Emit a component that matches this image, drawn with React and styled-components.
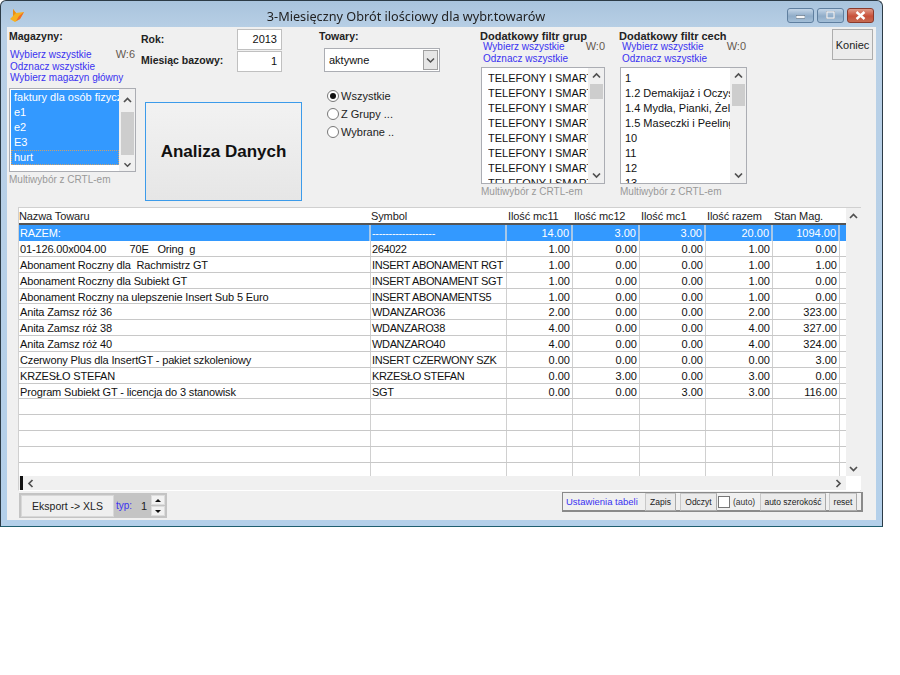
import React from 'react';
import styled, { createGlobalStyle } from 'styled-components';

const GlobalStyle = createGlobalStyle`
  html, body {
    margin: 0;
    background: #fff;
    font-family: "Liberation Sans", Arial, sans-serif;
    font-size: 11px;
    color: #111;
  }
`;

const Window = styled.div`
  width: 883px;
  height: 527px;
  box-sizing: border-box;
  border: 1px solid #2c3b46;
  border-bottom-color: #1f5f70;
  border-radius: 6px 6px 0 0;
  background: linear-gradient(to bottom, #a9c4dd 0, #b9d0e6 30px, #b4d0ea 100%);
  display: flex;
  flex-direction: column;
  padding: 0 6px 6px;
  filter: blur(0.3px);
`;

const TitleBar = styled.div`
  height: 26px;
  display: flex;
  align-items: center;
  flex-shrink: 0;
`;

const TitleIcon = styled.svg`
  width: 16px;
  height: 16px;
  margin: 4px 0 0 2px;
`;

const Title = styled.div`
  flex: 1;
  text-align: center;
  font-family: "Noto Sans", sans-serif;
  font-size: 12.7px;
  color: #222;
  padding-top: 4px;
`;

const Caption = styled.div`
  display: flex;
  gap: 3px;
  margin: 2px 2px 0 0;
`;

const CaptionButton = styled.div`
  width: 27px;
  height: 15px;
  border: 1px solid ${({ $close }) => ($close ? '#8a3a2c' : '#5f7f9f')};
  border-radius: 3px;
  box-sizing: border-box;
  background: ${({ $close }) =>
    $close
      ? 'linear-gradient(to bottom, #e09a88, #c8503a 55%, #c46a52)'
      : 'linear-gradient(to bottom, #c4d6e8, #8facc8 55%, #a4bfd8)'};
  display: flex;
  align-items: center;
  justify-content: center;
  svg { display: block; }
`;

const Client = styled.div`
  flex: 1;
  background: #f0f0f0;
  display: flex;
  flex-direction: column;
  min-height: 0;
`;

const TopPanel = styled.div`
  height: 180px;
  display: flex;
  padding-left: 2px;
  flex-shrink: 0;
`;

const Column = styled.div`
  width: ${({ $w }) => $w}px;
  flex-shrink: 0;
  display: flex;
  flex-direction: column;
  align-items: flex-start;
`;

const Heading = styled.div`
  font-weight: bold;
  font-size: ${({ $size }) => $size || 10.5}px;
  line-height: 12px;
  margin-top: 3px;
  color: #222;
  white-space: nowrap;
`;

const LinkRow = styled.div`
  display: flex;
  width: ${({ $w }) => $w}px;
  justify-content: space-between;
  padding-left: ${({ $in }) => $in || 0}px;
  box-sizing: border-box;
`;

const BlueLink = styled.div`
  font-size: 10px;
  line-height: 11.7px;
  color: #3a32f0;
  white-space: nowrap;
  padding-left: ${({ $in }) => $in || 0}px;
`;

const Counter = styled.span`
  font-size: 11px;
  line-height: 11.5px;
  color: #665a50;
`;

const LinkBlock = styled.div`
  margin-top: ${({ $mt }) => $mt}px;
`;

const ListBox = styled.div`
  width: ${({ $w }) => $w}px;
  height: ${({ $h }) => $h}px;
  margin: ${({ $mt }) => $mt}px 0 0 ${({ $ml }) => $ml || 0}px;
  box-sizing: border-box;
  border: 1px solid #abadb3;
  background: #fff;
  display: flex;
  overflow: hidden;
  flex-shrink: 0;
`;

const ListItems = styled.div`
  flex: 1;
  min-width: 0;
  overflow: hidden;
  padding: ${({ $pad }) => $pad}px 0 0 ${({ $left }) => $left}px;
`;

const ListItem = styled.div`
  height: 15px;
  line-height: 15px;
  font-size: 11px;
  white-space: nowrap;
  overflow: hidden;
  box-sizing: border-box;
  padding-left: ${({ $sel }) => ($sel ? 3 : 0)}px;
  background: ${({ $sel }) => ($sel ? '#3399ff' : 'transparent')};
  color: ${({ $sel }) => ($sel ? '#fff' : '#111')};
  outline: ${({ $focus }) => ($focus ? '1px dotted #c8a070' : 'none')};
  outline-offset: -1px;
`;

const ListScroll = styled.div`
  width: 16px;
  flex-shrink: 0;
  background: #f0f0f0;
  display: flex;
  flex-direction: column;
  align-items: center;
`;

const Arrow = styled.svg`
  width: 15px;
  height: ${({ $h }) => $h || 15}px;
  flex-shrink: 0;
`;

const Thumb = styled.div`
  width: 13px;
  height: ${({ $h }) => $h}px;
  background: #cdcdcd;
  flex-shrink: 0;
`;

const Spring = styled.div`
  flex: 1;
`;

const Hint = styled.div`
  font-size: 10px;
  color: #999;
  line-height: 12px;
  margin: ${({ $mt }) => $mt}px 0 0 ${({ $ml }) => $ml || 0}px;
  white-space: nowrap;
`;

const FieldRow = styled.div`
  display: flex;
  align-items: center;
  width: 141px;
  height: 21px;
  margin-top: ${({ $mt }) => $mt}px;
`;

const FieldLabel = styled.div`
  width: 96px;
  font-weight: bold;
  font-size: 10.5px;
  color: #222;
  white-space: nowrap;
  margin-top: ${({ $up }) => -$up}px;
`;

const NumberBox = styled.div`
  width: 45px;
  height: 21px;
  box-sizing: border-box;
  border: 1px solid #c0c0c0;
  background: #fff;
  text-align: right;
  padding-right: 4px;
  line-height: 19px;
  font-size: 11px;
`;

const BigButton = styled.div`
  width: 157px;
  height: 99px;
  margin: 30px 0 0 4px;
  box-sizing: border-box;
  border: 1px solid #3c9bea;
  background: linear-gradient(to bottom, #f2f2f2, #e6e6e6);
  font-size: 17px;
  font-weight: bold;
  color: #111;
  display: flex;
  align-items: center;
  justify-content: center;
`;

const Select = styled.div`
  width: 116px;
  height: 24px;
  margin: 6px 0 0 5px;
  box-sizing: border-box;
  border: 1px solid #abadb3;
  background: #fff;
  display: flex;
  align-items: center;
  justify-content: space-between;
  padding: 1px 1px 1px 4px;
  font-size: 11px;
`;

const SelectArrow = styled.div`
  width: 15px;
  height: 20px;
  box-sizing: border-box;
  border: 1px solid #a0a0a0;
  background: #e6e6e6;
  display: flex;
  align-items: center;
  justify-content: center;
`;

const RadioGroup = styled.div`
  margin: 18px 0 0 8px;
  display: flex;
  flex-direction: column;
  gap: 6px;
`;

const RadioRow = styled.div`
  display: flex;
  align-items: center;
  height: 12px;
  gap: 2px;
  font-size: 11px;
  color: #222;
`;

const RadioDot = styled.div`
  width: 12px;
  height: 12px;
  box-sizing: border-box;
  border: 1px solid #777;
  border-radius: 50%;
  background: #fff;
  display: flex;
  align-items: center;
  justify-content: center;
  &::after {
    content: '';
    width: 6px;
    height: 6px;
    border-radius: 50%;
    background: ${({ $on }) => ($on ? '#111' : 'transparent')};
  }
`;

const CloseButton = styled.div`
  width: 41px;
  height: 31px;
  margin-top: 2px;
  box-sizing: border-box;
  border: 1px solid #adadad;
  background: #ececec;
  font-size: 11px;
  color: #222;
  display: flex;
  align-items: center;
  justify-content: center;
`;

const Table = styled.div`
  width: 843px;
  height: 284px;
  margin-left: 11px;
  box-sizing: border-box;
  border: 1px solid #d0d0d0;
  border-bottom-color: #fff;
  background: #fff;
  display: grid;
  grid-template-columns: 827px 15px;
  grid-template-rows: 1fr 14px;
  flex-shrink: 0;
`;

const Rows = styled.div`
  overflow: hidden;
  min-height: 0;
`;

const cols = '352px 136px 66px 67px 66px 67px 67px 6px';

const HeaderRow = styled.div`
  display: grid;
  grid-template-columns: ${cols};
  height: 17px;
  box-sizing: border-box;
  border-bottom: 2px solid #555;
  line-height: 16px;
  color: #222;
  letter-spacing: -0.12px;
`;

const HeaderCell = styled.div`
  white-space: nowrap;
  overflow: hidden;
  padding-left: ${({ $num }) => ($num ? 1 : 0)}px;
`;

const Row = styled.div`
  display: grid;
  grid-template-columns: ${cols};
  height: ${({ $sel }) => ($sel ? 16 : 15.85)}px;
  box-sizing: border-box;
  background: ${({ $sel }) => ($sel ? '#3399ff' : '#fff')};
  color: ${({ $sel }) => ($sel ? '#fff' : '#111')};
  border-bottom: ${({ $sel }) => ($sel ? 'none' : '1px solid #c8c8c8')};
`;

const Cell = styled.div`
  box-sizing: border-box;
  border-right: ${({ $sel }) => ($sel ? '2px solid #a8c8e8' : '1px solid #d0d0d0')};
  padding: 1px 2px 0 1px;
  line-height: 15px;
  white-space: pre;
  overflow: hidden;
  text-align: ${({ $num }) => ($num ? 'right' : 'left')};
  letter-spacing: ${({ $spacing }) => $spacing}px;
`;

const VScroll = styled.div`
  background: #f0f0f0;
  display: flex;
  flex-direction: column;
  align-items: center;
  padding: 1px 0 0;
`;

const HScroll = styled.div`
  background: #f0f0f0;
  display: flex;
  align-items: center;
  height: 14px;
`;

const HMark = styled.div`
  width: 3px;
  height: 14px;
  background: #111;
  margin-left: 1px;
`;

const Corner = styled.div`
  background: #fff;
`;

const BottomBar = styled.div`
  flex: 1;
  display: flex;
  justify-content: space-between;
  align-items: flex-start;
  padding: 1px 13px 0 12px;
`;

const ExportPanel = styled.div`
  width: 148px;
  height: 25px;
  margin-top: 1px;
  background: #c4c4c4;
  display: flex;
  align-items: center;
  padding-left: 2px;
  box-sizing: border-box;
`;

const ExportButton = styled.div`
  width: 93px;
  height: 22px;
  box-sizing: border-box;
  border: 1px solid #d8d8d8;
  background: #efefef;
  color: #222;
  font-size: 10.5px;
  display: flex;
  align-items: center;
  justify-content: center;
`;

const TypLabel = styled.div`
  width: 27px;
  padding-left: 2px;
  box-sizing: border-box;
  font-size: 10px;
  color: #3a32f0;
`;

const TypValue = styled.div`
  width: 9px;
  font-size: 11px;
  color: #222;
`;

const Spin = styled.div`
  width: 14px;
  height: 21px;
  margin-left: 1px;
  display: flex;
  flex-direction: column;
  gap: 1px;
`;

const SpinPart = styled.div`
  flex: 1;
  background: #f2f2f2;
  border: 1px solid #ddd;
  box-sizing: border-box;
  display: flex;
  align-items: center;
  justify-content: center;
  &::after {
    content: '';
    border-left: 3px solid transparent;
    border-right: 3px solid transparent;
    ${({ $down }) => ($down ? 'border-top: 3px solid #111;' : 'border-bottom: 3px solid #111;')}
  }
`;

const SettingsPanel = styled.div`
  width: 301px;
  height: 20px;
  box-sizing: border-box;
  border: 1px solid #8a8a8a;
  border-width: 1px 2px 2px 1px;
  display: flex;
  align-items: center;
  padding-left: 3px;
  font-size: 8.5px;
  color: #222;
`;

const SettingsTitle = styled.div`
  width: 79px;
  font-size: 9.5px;
  color: #3a32f0;
  white-space: nowrap;
`;

const SmallButton = styled.div`
  width: ${({ $w }) => $w}px;
  height: 18px;
  margin-left: ${({ $ml }) => $ml || 0}px;
  box-sizing: border-box;
  border: 1px solid #c8c8c8;
  border-right-color: #aaa;
  border-bottom-color: #aaa;
  background: #ebebeb;
  font-size: 8.5px;
  display: flex;
  align-items: center;
  justify-content: center;
  white-space: nowrap;
`;

const CheckBox = styled.div`
  width: 12px;
  height: 12px;
  box-sizing: border-box;
  border: 1px solid #777;
  background: #fff;
  margin-left: 1px;
`;

const AutoLabel = styled.div`
  width: 29px;
  padding-left: 3px;
  box-sizing: border-box;
  font-size: 8.5px;
  color: #333;
`;

const Chevron = ({ dir, h }) => {
  const d = {
    up: 'M4 9 L7.5 5.5 L11 9',
    down: 'M4 6 L7.5 9.5 L11 6',
    left: 'M9.5 4 L6 7.5 L9.5 11',
    right: 'M5.5 4 L9 7.5 L5.5 11',
  }[dir];
  return (
    <Arrow viewBox="0 0 15 15" $h={h}>
      <path d={d} fill="none" stroke="#505050" strokeWidth="1.7" />
    </Arrow>
  );
};

const cellSpacing = (i) => (i === 0 ? -0.15 : i === 1 ? -0.35 : 0);

const warehouses = ['faktury dla osób fizycznych', 'e1', 'e2', 'E3', 'hurt'];
const groups = Array(8).fill('TELEFONY I SMARTFONY');
const features = ['1', '1.2 Demakijaż i Oczyszczanie', '1.4 Mydła, Pianki, Żele', '1.5 Maseczki i Peelingi', '10', '11', '12', '13'];

const empty = ['', '', '', '', '', '', ''];

const rows = [
  ['01-126.00x004.00        70E   Oring  g', '264022', '1.00', '0.00', '0.00', '1.00', '0.00'],
  ['Abonament Roczny dla  Rachmistrz GT', 'INSERT ABONAMENT RGT', '1.00', '0.00', '0.00', '1.00', '1.00'],
  ['Abonament Roczny dla Subiekt GT', 'INSERT ABONAMENT SGT', '1.00', '0.00', '0.00', '1.00', '0.00'],
  ['Abonament Roczny na ulepszenie Insert Sub 5 Euro', 'INSERT ABONAMENTS5', '1.00', '0.00', '0.00', '1.00', '0.00'],
  ['Anita Zamsz róż 36', 'WDANZARO36', '2.00', '0.00', '0.00', '2.00', '323.00'],
  ['Anita Zamsz róż 38', 'WDANZARO38', '4.00', '0.00', '0.00', '4.00', '327.00'],
  ['Anita Zamsz róż 40', 'WDANZARO40', '4.00', '0.00', '0.00', '4.00', '324.00'],
  ['Czerwony Plus dla InsertGT - pakiet szkoleniowy', 'INSERT CZERWONY SZK', '0.00', '0.00', '0.00', '0.00', '3.00'],
  ['KRZESŁO STEFAN', 'KRZESŁO STEFAN', '0.00', '3.00', '0.00', '3.00', '0.00'],
  ['Program Subiekt GT - licencja do 3 stanowisk', 'SGT', '0.00', '0.00', '3.00', '3.00', '116.00'],
  empty,
  empty,
  empty,
  empty,
  empty,
];

const headers = ['Nazwa Towaru', 'Symbol', 'Ilość mc11', 'Ilość mc12', 'Ilość mc1', 'Ilość razem', 'Stan Mag.', ''];
const total = ['RAZEM:', '-------------------', '14.00', '3.00', '3.00', '20.00', '1094.00'];

const App = () => (
  <>
    <GlobalStyle />
    <Window>
      <TitleBar>
        <TitleIcon viewBox="0 0 16 16">
          <path d="M4 1 L7 5 L15 4 L11 11 L6 14 L1 11 L4 8 Z" fill="#f6b01e" />
          <path d="M15 4 L11 11 L7 13 L10 8 Z" fill="#ef6a2a" />
          <path d="M4 1 L7 5 L4 8 Z" fill="#e88c18" />
        </TitleIcon>
        <Title>3-Miesięczny Obrót ilościowy dla wybr.towarów</Title>
        <Caption>
          <CaptionButton>
            <svg width="9" height="7"><rect width="9" height="3" y="3.5" fill="#f4f6f8" stroke="#46586a" strokeWidth="0.5" /></svg>
          </CaptionButton>
          <CaptionButton>
            <svg width="9" height="8"><rect x="0.75" y="0.75" width="7.5" height="6.5" fill="none" stroke="#f4f6f8" strokeWidth="1.5" /><rect x="0" y="0" width="9" height="8" fill="none" stroke="#46586a" strokeWidth="0.4" /></svg>
          </CaptionButton>
          <CaptionButton $close>
            <svg width="11" height="9"><path d="M1.5 1 L9.5 8 M9.5 1 L1.5 8" stroke="#fff" strokeWidth="2.4" /></svg>
          </CaptionButton>
        </Caption>
      </TitleBar>
      <Client>
        <TopPanel>
          <Column $w={132}>
            <Heading>Magazyny:</Heading>
            <LinkBlock $mt={7}>
              <LinkRow $w={126} $in={1}>
                <BlueLink>Wybierz wszystkie</BlueLink>
                <Counter>W:6</Counter>
              </LinkRow>
              <BlueLink $in={1}>Odznacz wszystkie</BlueLink>
              <BlueLink $in={1}>Wybierz magazyn główny</BlueLink>
            </LinkBlock>
            <ListBox $w={127} $h={84} $mt={4}>
              <ListItems $pad={1} $left={1}>
                {warehouses.map((w, i) => (
                  <ListItem key={w} $sel $focus={i === 4}>{w}</ListItem>
                ))}
              </ListItems>
              <ListScroll>
                <Chevron dir="up" h={23} />
                <Thumb $h={43} />
                <Spring />
                <Chevron dir="down" h={13} />
              </ListScroll>
            </ListBox>
            <Hint $mt={2}>Multiwybór z CRTL-em</Hint>
          </Column>
          <Column $w={178}>
            <FieldRow $mt={2}>
              <FieldLabel $up={2}>Rok:</FieldLabel>
              <NumberBox>2013</NumberBox>
            </FieldRow>
            <FieldRow $mt={1}>
              <FieldLabel $up={3}>Miesiąc bazowy:</FieldLabel>
              <NumberBox>1</NumberBox>
            </FieldRow>
            <BigButton>Analiza Danych</BigButton>
          </Column>
          <Column $w={161}>
            <Heading>Towary:</Heading>
            <Select>
              aktywne
              <SelectArrow>
                <svg width="9" height="7"><path d="M1 1.5 L4.5 5 L8 1.5" fill="none" stroke="#505050" strokeWidth="1.5" /></svg>
              </SelectArrow>
            </Select>
            <RadioGroup>
              <RadioRow><RadioDot $on />Wszystkie</RadioRow>
              <RadioRow><RadioDot />Z Grupy ...</RadioRow>
              <RadioRow><RadioDot />Wybrane ..</RadioRow>
            </RadioGroup>
          </Column>
          <Column $w={139}>
            <Heading $size={11}>Dodatkowy filtr grup</Heading>
            <LinkBlock $mt={-1}>
              <LinkRow $w={125} $in={3}>
                <BlueLink>Wybierz wszystkie</BlueLink>
                <Counter>W:0</Counter>
              </LinkRow>
              <BlueLink $in={3}>Odznacz wszystkie</BlueLink>
            </LinkBlock>
            <ListBox $w={124} $h={117} $mt={3} $ml={1}>
              <ListItems $pad={3} $left={6}>
                {groups.map((g, i) => (
                  <ListItem key={i}>{g}</ListItem>
                ))}
              </ListItems>
              <ListScroll>
                <Chevron dir="up" h={16} />
                <Thumb $h={15} />
                <Spring />
                <Chevron dir="down" h={16} />
              </ListScroll>
            </ListBox>
            <Hint $mt={2} $ml={1}>Multiwybór z CRTL-em</Hint>
          </Column>
          <Column $w={213}>
            <Heading $size={11}>Dodatkowy filtr cech</Heading>
            <LinkBlock $mt={-1}>
              <LinkRow $w={127} $in={3}>
                <BlueLink>Wybierz wszystkie</BlueLink>
                <Counter>W:0</Counter>
              </LinkRow>
              <BlueLink $in={3}>Odznacz wszystkie</BlueLink>
            </LinkBlock>
            <ListBox $w={127} $h={117} $mt={3} $ml={1}>
              <ListItems $pad={3} $left={4}>
                {features.map((f) => (
                  <ListItem key={f}>{f}</ListItem>
                ))}
              </ListItems>
              <ListScroll>
                <Chevron dir="up" h={16} />
                <Thumb $h={22} />
                <Spring />
                <Chevron dir="down" h={16} />
              </ListScroll>
            </ListBox>
            <Hint $mt={2} $ml={1}>Multiwybór z CRTL-em</Hint>
          </Column>
          <Column $w={41}>
            <CloseButton>Koniec</CloseButton>
          </Column>
        </TopPanel>
        <Table>
          <Rows>
            <HeaderRow>
              {headers.map((h, i) => (
                <HeaderCell key={i} $num={i > 1}>{h}</HeaderCell>
              ))}
            </HeaderRow>
            <Row $sel>
              {total.map((c, i) => (
                <Cell key={i} $sel $num={i > 1} $spacing={cellSpacing(i)}>{c}</Cell>
              ))}
            </Row>
            {rows.map((r, n) => (
              <Row key={n}>
                {r.map((c, i) => (
                  <Cell key={i} $num={i > 1} $spacing={cellSpacing(i)}>{c}</Cell>
                ))}
              </Row>
            ))}
          </Rows>
          <VScroll>
            <Chevron dir="up" />
            <Spring />
            <Chevron dir="down" />
          </VScroll>
          <HScroll>
            <HMark />
            <Chevron dir="left" />
            <Spring />
            <Chevron dir="right" />
          </HScroll>
          <Corner />
        </Table>
        <BottomBar>
          <ExportPanel>
            <ExportButton>Eksport -&gt; XLS</ExportButton>
            <TypLabel>typ:</TypLabel>
            <TypValue>1</TypValue>
            <Spin>
              <SpinPart />
              <SpinPart $down />
            </Spin>
          </ExportPanel>
          <SettingsPanel>
            <SettingsTitle>Ustawienia tabeli</SettingsTitle>
            <SmallButton $w={31}>Zapis</SmallButton>
            <SmallButton $w={37} $ml={4}>Odczyt</SmallButton>
            <CheckBox />
            <AutoLabel>(auto)</AutoLabel>
            <SmallButton $w={66} $ml={1}>auto szerokość</SmallButton>
            <SmallButton $w={28} $ml={3}>reset</SmallButton>
          </SettingsPanel>
        </BottomBar>
      </Client>
    </Window>
  </>
);

export default App;
